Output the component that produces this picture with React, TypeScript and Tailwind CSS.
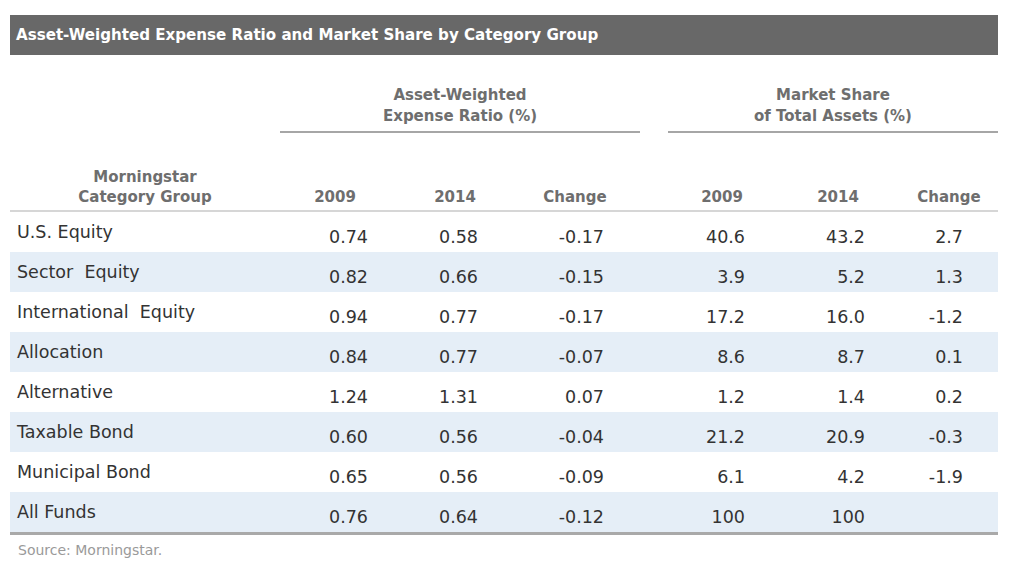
const rows = [
  { name: "U.S. Equity", v: ["0.74", "0.58", "-0.17", "40.6", "43.2", "2.7"] },
  { name: "Sector  Equity", v: ["0.82", "0.66", "-0.15", "3.9", "5.2", "1.3"] },
  { name: "International  Equity", v: ["0.94", "0.77", "-0.17", "17.2", "16.0", "-1.2"] },
  { name: "Allocation", v: ["0.84", "0.77", "-0.07", "8.6", "8.7", "0.1"] },
  { name: "Alternative", v: ["1.24", "1.31", "0.07", "1.2", "1.4", "0.2"] },
  { name: "Taxable Bond", v: ["0.60", "0.56", "-0.04", "21.2", "20.9", "-0.3"] },
  { name: "Municipal Bond", v: ["0.65", "0.56", "-0.09", "6.1", "4.2", "-1.9"] },
  { name: "All Funds", v: ["0.76", "0.64", "-0.12", "100", "100", ""] },
];

// width, header padding-right, number padding-right (px)
const cols = [
  { w: "w-[110px]", hp: "pr-0", np: "pr-[22px]" },
  { w: "w-[130px]", hp: "pr-0", np: "pr-[42px]" },
  { w: "w-[120px]", hp: "pr-[10px]", np: "pr-[36px]" },
  { w: "w-[108px]", hp: "pr-0", np: "pr-[31px]" },
  { w: "w-[124px]", hp: "pr-0", np: "pr-[35px]" },
  { w: "w-[98px]", hp: "pr-0", np: "pr-[35px]" },
];

const years = ["2009", "2014", "Change", "2009", "2014", "Change"];

function Spacer() {
  return <div className="w-[28px] shrink-0" />;
}

export default function App() {
  return (
    <div
      className="w-[1018px] h-[570px] bg-white pt-[15px] pl-[10px]"
      style={{ fontFamily: '"DejaVu Sans", Verdana, sans-serif' }}
    >
      <div className="w-[988px]">
        <div className="h-[40px] bg-[#686868] flex items-center pl-[6px]">
          <span className="text-white font-bold text-[15.1px]">
            Asset-Weighted Expense Ratio and Market Share by Category Group
          </span>
        </div>

        {/* group headers */}
        <div className="flex h-[78px] items-end">
          <div className="w-[270px] shrink-0" />
          <div className="w-[360px] shrink-0 border-b-2 border-[#a6a6a6] pb-[4px] text-center text-[15px] leading-[21px] font-bold text-[#6e6e6e]">
            Asset-Weighted
            <br />
            Expense Ratio (%)
          </div>
          <Spacer />
          <div className="w-[330px] shrink-0 border-b-2 border-[#a6a6a6] pb-[4px] text-center text-[15px] leading-[21px] font-bold text-[#6e6e6e]">
            Market Share
            <br />
            of Total Assets (%)
          </div>
        </div>

        {/* column headers */}
        <div className="flex h-[79px] items-end pb-[3px] border-b-2 border-[#d6d6d6] text-[15px] leading-[20px] font-bold text-[#6e6e6e]">
          <div className="w-[270px] shrink-0 text-center">
            Morningstar
            <br />
            Category Group
          </div>
          {years.map((y, i) => (
            <div key={i} className="contents">
              {i === 3 && <Spacer />}
              <div className={`${cols[i].w} ${cols[i].hp} shrink-0 text-center`}>{y}</div>
            </div>
          ))}
        </div>

        {/* body */}
        <div className="border-b-[3px] border-[#a9a9a9]">
          {rows.map((r, ri) => (
            <div
              key={r.name}
              className={`flex h-[40px] items-center text-[#333333] ${ri % 2 === 1 ? "bg-[#e5eef7]" : "bg-white"}`}
            >
              <div className="w-[270px] shrink-0 pl-[7px] text-[17.5px] whitespace-pre">{r.name}</div>
              {r.v.map((v, i) => (
                <div key={i} className="contents">
                  {i === 3 && <Spacer />}
                  <div className={`${cols[i].w} ${cols[i].np} shrink-0 text-right pt-[10px] text-[17.5px]`}>
                    {v}
                  </div>
                </div>
              ))}
            </div>
          ))}
        </div>

        <div className="mt-[6px] pl-[8px] text-[14px] leading-[18px] text-[#9a9a9a]">Source: Morningstar.</div>
      </div>
    </div>
  );
}
